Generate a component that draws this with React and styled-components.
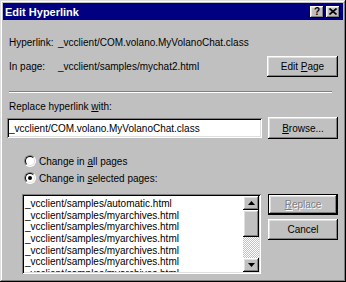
import React from "react";
import styled, { createGlobalStyle } from "styled-components";

const Global = createGlobalStyle`
  html, body {
    margin: 0;
    padding: 0;
    background: #c0c0c0;
  }
  body {
    font-family: "Liberation Sans", Arial, sans-serif;
    font-size: 10px;
    color: #000;
  }
`;

const raised = `
  box-shadow: inset -1px -1px #000, inset 1px 1px #fff,
    inset -2px -2px #808080, inset 2px 2px #dfdfdf;
`;

const sunken = `
  box-shadow: inset 1px 1px #808080, inset -1px -1px #fff,
    inset 2px 2px #000, inset -2px -2px #dfdfdf;
`;

const Window = styled.div`
  width: 346px;
  height: 282px;
  box-sizing: border-box;
  padding: 3px;
  overflow: hidden;
  background: #c0c0c0;
  box-shadow: inset -1px -1px #000, inset 1px 1px #dfdfdf,
    inset -2px -2px #808080, inset 2px 2px #fff;
`;

const TitleBar = styled.div`
  height: 17px;
  background: #000080;
  display: flex;
  align-items: center;
  padding: 0 3px 0 2px;
`;

const Title = styled.div`
  flex: 1;
  color: #fff;
  font-weight: bold;
  font-size: 11px;
`;

const CaptionButton = styled.div`
  width: 14px;
  height: 12px;
  margin-left: ${(p) => (p.$gap ? "2px" : "0")};
  background: #c0c0c0;
  ${raised}
  display: flex;
  align-items: center;
  justify-content: center;
  font-weight: bold;
  font-size: 10px;
  line-height: 1;
  box-sizing: border-box;
`;

const Body = styled.div`
  display: flex;
  flex-direction: column;
  padding: 16px 5px 0 4px;
`;

const InfoRow = styled.div`
  display: flex;
  align-items: center;
  height: ${(p) => p.$h}px;
  margin-top: ${(p) => p.$mt || 0}px;
  padding-left: 2px;
`;

const Label = styled.span`
  width: 49px;
`;

const Value = styled.span`
  flex: 1;
`;

const Button = styled.div`
  width: ${(p) => p.$w || 70}px;
  height: ${(p) => p.$h || 21}px;
  box-sizing: border-box;
  background: #c0c0c0;
  ${raised}
  ${(p) =>
    p.$default &&
    `box-shadow: inset 0 0 0 1px #000, inset -2px -2px #000, inset 2px 2px #fff,
      inset -3px -3px #808080, inset 3px 3px #dfdfdf;`}
  display: flex;
  align-items: center;
  justify-content: center;
  color: ${(p) => (p.$disabled ? "#808080" : "#000")};
  text-shadow: ${(p) => (p.$disabled ? "1px 1px #fff" : "none")};
  margin-top: ${(p) => p.$mt || 0}px;
`;

const Separator = styled.div`
  height: 1px;
  margin: 14px 6px 0 2px;
  background: #808080;
  border-bottom: 1px solid #fff;
`;

const Caption = styled.div`
  margin-top: 8px;
  padding-left: 2px;
  line-height: 12px;
`;

const InputRow = styled.div`
  display: flex;
  align-items: center;
  justify-content: space-between;
  height: 22px;
  margin-top: 4px;
`;

const TextField = styled.div`
  width: 255px;
  height: 20px;
  box-sizing: border-box;
  background: #fff;
  ${sunken}
  display: flex;
  align-items: center;
  padding-left: 2px;
  white-space: nowrap;
  overflow: hidden;
`;

const RadioRow = styled.div`
  display: flex;
  align-items: center;
  height: 12px;
  margin-top: ${(p) => p.$mt}px;
  padding-left: 17px;
  gap: 3px;
`;

const Radio = styled.span`
  position: relative;
  width: 12px;
  height: 12px;
  box-sizing: border-box;
  border-radius: 50%;
  border: 1px solid;
  border-color: #808080 #fff #fff #808080;
  background: #fff;

  &::before {
    content: "";
    position: absolute;
    inset: 0;
    border-radius: 50%;
    border: 1px solid;
    border-color: #000 #dfdfdf #dfdfdf #000;
  }

  &::after {
    content: "";
    display: ${(p) => (p.$checked ? "block" : "none")};
    position: absolute;
    left: 3px;
    top: 3px;
    width: 4px;
    height: 4px;
    border-radius: 50%;
    background: #000;
  }
`;

const ListRow = styled.div`
  display: flex;
  justify-content: space-between;
  margin-top: 10px;
  padding-left: 15px;
`;

const ListBox = styled.div`
  width: 239px;
  height: 80px;
  box-sizing: border-box;
  padding: 2px;
  background: #fff;
  ${sunken}
  display: flex;
`;

const Items = styled.div`
  flex: 1;
  overflow: hidden;
  padding: 2px 0 0 1px;
`;

const Item = styled.div`
  line-height: 11.66px;
  white-space: nowrap;
`;

const ScrollBar = styled.div`
  width: 16px;
  display: flex;
  flex-direction: column;
`;

const ScrollButton = styled.div`
  height: ${(p) => p.$h}px;
  background: #c0c0c0;
  ${raised}
  display: flex;
  align-items: center;
  justify-content: center;
`;

const Track = styled.div`
  flex: 1;
  background: repeating-conic-gradient(#c0c0c0 0 25%, #fff 0 50%) 0 0 / 2px 2px;
`;

const SideButtons = styled.div`
  display: flex;
  flex-direction: column;
`;

const Arrow = ({ up }) => (
  <svg width="7" height="4" viewBox="0 0 7 4">
    <path d={up ? "M3.5 0 L7 4 L0 4 Z" : "M0 0 L7 0 L3.5 4 Z"} fill="#000" />
  </svg>
);

const items = [
  "_vcclient/samples/automatic.html",
  "_vcclient/samples/myarchives.html",
  "_vcclient/samples/myarchives.html",
  "_vcclient/samples/myarchives.html",
  "_vcclient/samples/myarchives.html",
  "_vcclient/samples/myarchives.html",
  "_vcclient/samples/myarchives.html",
];

const App = () => (
  <>
    <Global />
    <Window>
      <TitleBar>
        <Title>Edit Hyperlink</Title>
        <CaptionButton>?</CaptionButton>
        <CaptionButton $gap>
          <svg width="8" height="7" viewBox="0 0 8 7">
            <path d="M0.5 0.5 L7.5 6.5 M7.5 0.5 L0.5 6.5" stroke="#000" strokeWidth="1.6" />
          </svg>
        </CaptionButton>
      </TitleBar>
      <Body>
        <InfoRow $h={12}>
          <Label>Hyperlink:</Label>
          <Value>_vcclient/COM.volano.MyVolanoChat.class</Value>
        </InfoRow>
        <InfoRow $h={21} $mt={8}>
          <Label>In page:</Label>
          <Value>_vcclient/samples/mychat2.html</Value>
          <Button $w={71}>
            Edit&nbsp;<u>P</u>age
          </Button>
        </InfoRow>
        <Separator />
        <Caption>
          Replace hyperlink <u>w</u>ith:
        </Caption>
        <InputRow>
          <TextField>_vcclient/COM.volano.MyVolanoChat.class</TextField>
          <Button $h={22}>
            <u>B</u>rowse...
          </Button>
        </InputRow>
        <RadioRow $mt={16}>
          <Radio />
          <span>
            Change in <u>a</u>ll pages
          </span>
        </RadioRow>
        <RadioRow $mt={5}>
          <Radio $checked />
          <span>
            Change in <u>s</u>elected pages:
          </span>
        </RadioRow>
        <ListRow>
          <ListBox>
            <Items>
              {items.map((item, i) => (
                <Item key={i}>{item}</Item>
              ))}
            </Items>
            <ScrollBar>
              <ScrollButton $h={14}>
                <Arrow up />
              </ScrollButton>
              <ScrollButton $h={27} />
              <Track />
              <ScrollButton $h={14}>
                <Arrow />
              </ScrollButton>
            </ScrollBar>
          </ListBox>
          <SideButtons>
            <Button $h={21} $default $disabled>
              <u>R</u>eplace
            </Button>
            <Button $h={21} $mt={4}>
              Cancel
            </Button>
          </SideButtons>
        </ListRow>
      </Body>
    </Window>
  </>
);

export default App;
